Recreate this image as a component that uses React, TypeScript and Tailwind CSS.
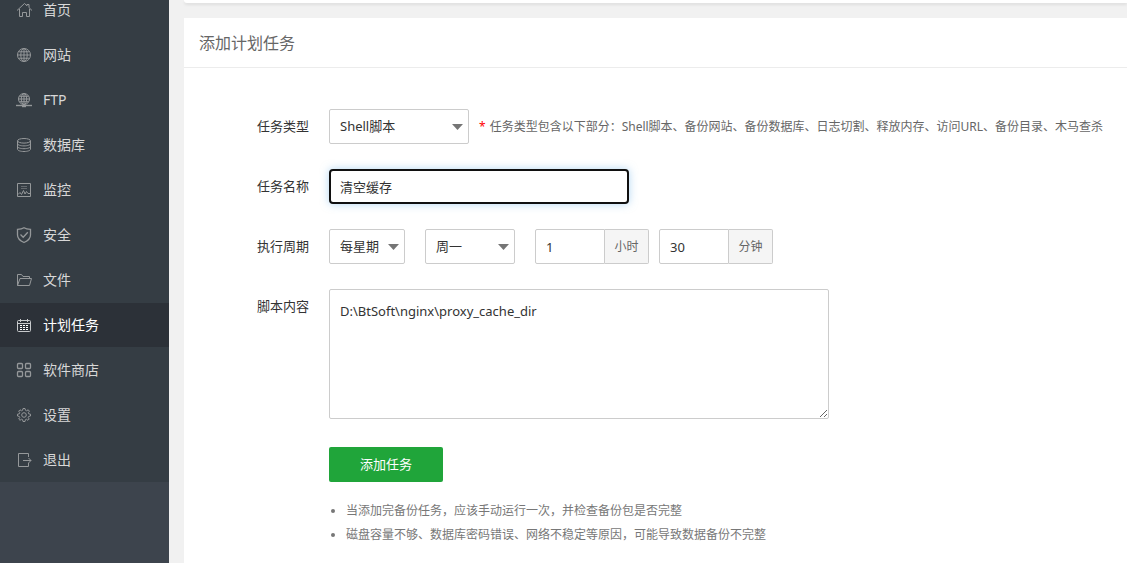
import type { ReactNode } from 'react'

type MenuItem = {
  label: string
  icon: ReactNode
  active?: boolean
}

const menu: MenuItem[] = [
  {
    label: '首页',
    icon: <path d="M1 8.5L8.5 1.5L11 3.8V2.5H13V5.6L16 8.5M3.5 7V14.5H6.5V10.5H10.5V14.5H13.5V7" />
  },
  {
    label: '网站',
    icon: (
      <>
        <circle cx="8" cy="8" r="6.5" />
        <ellipse cx="8" cy="8" rx="3.2" ry="6.5" />
        <path d="M8 1.5V14.5M1.5 8H14.5M2.8 4.8H13.2M2.8 11.2H13.2" />
      </>
    )
  },
  {
    label: 'FTP',
    icon: (
      <>
        <circle cx="8" cy="7" r="5.5" />
        <ellipse cx="8" cy="7" rx="2.7" ry="5.5" />
        <path d="M8 1.5V12.5M2.5 7H13.5M3.4 4.3H12.6M3.4 9.7H12.6" />
        <path d="M0 13.5H16" strokeWidth="1.4" />
        <path d="M6 14.2H10" strokeWidth="2" />
      </>
    )
  },
  {
    label: '数据库',
    icon: (
      <>
        <ellipse cx="8" cy="3.8" rx="6.5" ry="2.3" />
        <path d="M1.5 3.8V12.2C1.5 13.5 4.4 14.5 8 14.5S14.5 13.5 14.5 12.2V3.8M1.5 6.6C1.5 7.9 4.4 8.9 8 8.9S14.5 7.9 14.5 6.6M1.5 9.4C1.5 10.7 4.4 11.7 8 11.7S14.5 10.7 14.5 9.4" />
      </>
    )
  },
  {
    label: '监控',
    icon: (
      <>
        <path d="M1.5 1.5H14.5V14.5H1.5Z" />
        <path d="M5 4.5H11M5 6.5H11" opacity="0.5" />
        <path d="M2 12.5L4 10.5L5.5 12.5L7.5 8.5L9 12L10.5 9.5L12 11.5H14" />
      </>
    )
  },
  {
    label: '安全',
    icon: (
      <g strokeWidth="1.3">
        <path d="M8 0.8C9.8 2 12 2.3 14.5 2.3V8C14.5 11.5 11.5 14 8 15.5C4.5 14 1.5 11.5 1.5 8V2.3C4 2.3 6.2 2 8 0.8Z" />
        <path d="M4.5 7.5L7.2 10.2L11.8 5.3" />
      </g>
    )
  },
  {
    label: '文件',
    icon: <path d="M1.5 13.5V2.5H5.5L7 4.500H13.5V6.5M1.5 13.5L4 6.5H15.5L13.5 13.5Z" />
  },
  {
    label: '计划任务',
    active: true,
    icon: (
      <>
        <rect x="1.5" y="3.5" width="13" height="11" rx="1" />
        <path d="M4.5 2V5M11.5 2V5M2 6.5H14" />
        <path d="M4 8.5H12M4 10.5H12M4 12.5H12" stroke="#fff" strokeDasharray="2 1" />
      </>
    )
  },
  {
    label: '软件商店',
    icon: (
      <g strokeWidth="1.3">
        <rect x="1.5" y="1.5" width="5" height="5" rx="1" />
        <rect x="9.5" y="1.5" width="5" height="5" rx="1" />
        <rect x="1.5" y="9.5" width="5" height="5" rx="1" />
        <rect x="9.5" y="9.5" width="5" height="5" rx="1" />
      </g>
    )
  },
  {
    label: '设置',
    icon: (
      <>
        <path d="M7 1.5H9L9.5 3.3L10.6 3.8L12.2 2.8L13.4 4.2L12.3 5.7L12.7 6.8L14.5 7.2V9L12.7 9.4L12.2 10.5L13.2 12L11.9 13.3L10.4 12.2L9.4 12.7L9 14.5H7L6.6 12.7L5.5 12.2L4 13.3L2.7 12L3.8 10.5L3.3 9.4L1.5 9V7.2L3.3 6.8L3.8 5.7L2.7 4.2L4 2.8L5.5 3.8L6.6 3.3Z" />
        <circle cx="8" cy="8" r="2.3" />
      </>
    )
  },
  {
    label: '退出',
    icon: <path d="M12.5 5V1.5H2.5V14.5H12.5V11M7 8.5H15M12.5 6L15 8.5L12.5 11" />
  }
]

const control = 'h-[35px] rounded-xs border border-[#ccc] bg-white text-[13px] text-[#333] outline-none'

function Row({ label, htmlFor, children }: { label: string; htmlFor: string; children: ReactNode }) {
  return (
    <div className="flex items-start gap-5">
      <label htmlFor={htmlFor} className="w-[125px] shrink-0 text-right text-[13px] leading-[35px]">
        {label}
      </label>
      {children}
    </div>
  )
}

function Select({ id, label, options, className }: { id: string; label?: string; options: string[]; className: string }) {
  return (
    <div className={`relative shrink-0 ${className}`}>
      <select id={id} aria-label={label} className={`${control} block w-full appearance-none pl-2.5`}>
        {options.map((option) => (
          <option key={option}>{option}</option>
        ))}
      </select>
      <svg className="pointer-events-none absolute top-[15px] right-1.5 h-1.5 w-[11px] fill-[#757575]" viewBox="0 0 11 6">
        <path d="M0 0H11L5.5 6Z" />
      </svg>
    </div>
  )
}

function TimeInput({ id, label, value, unit }: { id: string; label: string; value: string; unit: string }) {
  return (
    <div className="flex">
      <input id={id} aria-label={label} defaultValue={value} className={`${control} w-[70px] rounded-r-none pl-2.5`} />
      <span className="flex h-[35px] w-11 items-center justify-center rounded-r-xs border border-l-0 border-[#ccc] bg-[#f5f5f5] text-xs text-[#666]">
        {unit}
      </span>
    </div>
  )
}

export default function App() {
  return (
    <div className="flex min-h-screen overflow-hidden bg-[#f1f1f1] font-['Noto_Sans','Noto_Sans_CJK_SC',sans-serif] text-[#333]">
      {/* Sidebar */}
      <aside className="w-[169px] shrink-0 bg-[#3d444d]">
        <nav className="-mt-[13px] bg-[#353d44]">
          <ul>
            {menu.map(({ label, icon, active }) => (
              <li key={label} className="pt-px">
                <a
                  href="#"
                  aria-current={active ? 'page' : undefined}
                  className={`flex h-11 items-center gap-[11px] pl-4 text-sm ${active ? 'bg-[#2c3138] text-white' : 'text-[#d8d8d8]'}`}
                >
                  <svg
                    className={`size-4 shrink-0 overflow-visible ${active ? 'stroke-[#c8cacc]' : 'stroke-[#95989a]'}`}
                    viewBox="0 0 16 16"
                    fill="none"
                  >
                    {icon}
                  </svg>
                  {label}
                </a>
              </li>
            ))}
          </ul>
        </nav>
      </aside>

      <main className="flex min-w-0 flex-1 flex-col gap-[15px] pl-[15px]">
        <div className="h-[3px] shrink-0 rounded-bl-sm bg-white shadow-[0_2px_3px_rgba(0,0,0,0.08)]" />

        <section className="flex-1 bg-white">
          <h1 className="h-[50px] border-b border-[#ececec] pl-[15px] text-base leading-[50px] text-[#666]">添加计划任务</h1>

          <form className="flex flex-col gap-[25px] pt-[41px]">
            <Row label="任务类型" htmlFor="type">
              <div className="flex items-center gap-2.5">
                <Select id="type" options={['Shell脚本', '备份网站', '备份数据库']} className="w-[140px]" />
                <p className="flex gap-1 text-xs whitespace-nowrap text-[#666]">
                  <span className="text-[#f00]">*</span>
                  任务类型包含以下部分：Shell脚本、备份网站、备份数据库、日志切割、释放内存、访问URL、备份目录、木马查杀
                </p>
              </div>
            </Row>

            <Row label="任务名称" htmlFor="name">
              <input
                id="name"
                defaultValue="清空缓存"
                className="h-[35px] w-[300px] rounded-sm border-2 border-[#101010] bg-white pl-[9px] text-[13px] shadow-[0_0_8px_rgba(102,175,233,0.5)] outline-none"
              />
            </Row>

            <Row label="执行周期" htmlFor="cycle">
              <div className="flex gap-5">
                <Select id="cycle" options={['每星期', '每天', '每月']} className="w-[76px]" />
                <Select id="week" label="星期" options={['周一', '周二', '周三', '周四', '周五', '周六', '周日']} className="w-[90px]" />
                <div className="flex gap-2.5">
                  <TimeInput id="hour" label="小时" value="1" unit="小时" />
                  <TimeInput id="minute" label="分钟" value="30" unit="分钟" />
                </div>
              </div>
            </Row>

            <Row label="脚本内容" htmlFor="script">
              <textarea
                id="script"
                defaultValue="D:\BtSoft\nginx\proxy_cache_dir"
                className="h-[130px] w-[500px] rounded-xs border border-[#ccc] bg-white p-2.5 text-[13px] leading-[22px] outline-none"
              />
            </Row>

            <div className="flex flex-col items-start gap-[17px] pt-[3px] pb-4 pl-[145px]">
              <button type="button" className="h-[35px] w-[114px] rounded-xs bg-[#20a53a] text-[13px] text-white">
                添加任务
              </button>
              <ul className="list-disc pl-[17px] text-xs leading-6 text-[#777]">
                <li>当添加完备份任务，应该手动运行一次，并检查备份包是否完整</li>
                <li>磁盘容量不够、数据库密码错误、网络不稳定等原因，可能导致数据备份不完整</li>
              </ul>
            </div>
          </form>
        </section>
      </main>
    </div>
  )
}
